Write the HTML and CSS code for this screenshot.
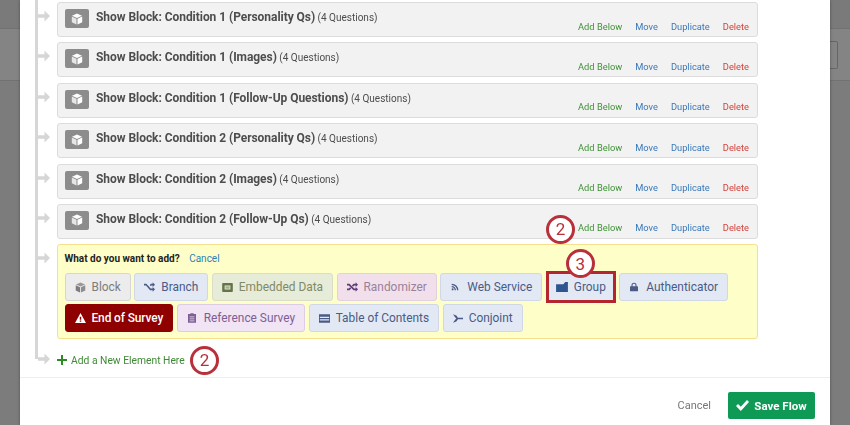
FILE: index.html
```html
<!DOCTYPE html>
<html lang="en">
<head>
  <meta charset="UTF-8">
  <title>Survey Flow</title>
  <link rel="stylesheet" href="styles.css">
</head>
<body>
  <svg class="defs" width="0" height="0">
    <symbol id="arrow" viewBox="0 0 12 12"><path d="M0 4.300h6.500V.5L12 6l-5.500 5.500V7.700H0z"/></symbol>
    <symbol id="cube" viewBox="0 0 12 12"><path d="M6 .5l5 2.200L6 5 1 2.700z" fill="#fff"/><path d="M.8 3.600L5.500 5.800v5.700L.8 9.200z" fill="#e6e6e6"/><path d="M11.200 3.600L6.500 5.800v5.700l4.700-2.300z" fill="#fff"/></symbol>
    <symbol id="cube-tint" viewBox="0 0 12 12"><path d="M6 .5l5 2.200L6 5 1 2.700z" opacity=".75"/><path d="M.8 3.600L5.500 5.800v5.700L.8 9.200z"/><path d="M11.200 3.600L6.500 5.800v5.700l4.700-2.300z" opacity=".85"/></symbol>
    <symbol id="branch" viewBox="0 0 14 12"><path d="M0 2h3l3 3.200L8.500 8H11V6l3 3-3 3v-2H7.700L4.500 6.300 2.500 4H0z"/><path d="M7.500 3.800L8.500 2H11V0l3 3-3 3V4H9.300L8.600 5z"/></symbol>
    <symbol id="shuffle" viewBox="0 0 14 12"><path d="M0 2h3.200l6 6H11V6l3 3-3 3v-2H8.300l-6-6H0zM0 8h2.300l1.600-1.600 1.400 1.400L3.200 10H0zM8.300 2H11V0l3 3-3 3V4H9.200L7.700 5.600 6.300 4.200z"/></symbol>
  </svg>

  <div class="page">
    <div class="side">
      <div class="band band-top"></div>
      <div class="band band-mid"></div>
      <div class="band band-low"></div>
    </div>

    <div class="modal">
      <div class="flow">
        <div class="flow-item">
          <svg class="arrow"><use href="#arrow"/></svg>
          <div class="block">
            <span class="block-icon"><svg width="12" height="12"><use href="#cube"/></svg></span>
            <div class="block-title"><b>Show Block: Condition 1 (Personality Qs)</b> <span>(4 Questions)</span></div>
            <div class="actions"><a class="green">Add Below</a><a class="blue">Move</a><a class="blue">Duplicate</a><a class="red">Delete</a></div>
          </div>
        </div>
        <div class="flow-item">
          <svg class="arrow"><use href="#arrow"/></svg>
          <div class="block">
            <span class="block-icon"><svg width="12" height="12"><use href="#cube"/></svg></span>
            <div class="block-title"><b>Show Block: Condition 1 (Images)</b> <span>(4 Questions)</span></div>
            <div class="actions"><a class="green">Add Below</a><a class="blue">Move</a><a class="blue">Duplicate</a><a class="red">Delete</a></div>
          </div>
        </div>
        <div class="flow-item">
          <svg class="arrow"><use href="#arrow"/></svg>
          <div class="block">
            <span class="block-icon"><svg width="12" height="12"><use href="#cube"/></svg></span>
            <div class="block-title"><b>Show Block: Condition 1 (Follow-Up Questions)</b> <span>(4 Questions)</span></div>
            <div class="actions"><a class="green">Add Below</a><a class="blue">Move</a><a class="blue">Duplicate</a><a class="red">Delete</a></div>
          </div>
        </div>
        <div class="flow-item">
          <svg class="arrow"><use href="#arrow"/></svg>
          <div class="block">
            <span class="block-icon"><svg width="12" height="12"><use href="#cube"/></svg></span>
            <div class="block-title"><b>Show Block: Condition 2 (Personality Qs)</b> <span>(4 Questions)</span></div>
            <div class="actions"><a class="green">Add Below</a><a class="blue">Move</a><a class="blue">Duplicate</a><a class="red">Delete</a></div>
          </div>
        </div>
        <div class="flow-item">
          <svg class="arrow"><use href="#arrow"/></svg>
          <div class="block">
            <span class="block-icon"><svg width="12" height="12"><use href="#cube"/></svg></span>
            <div class="block-title"><b>Show Block: Condition 2 (Images)</b> <span>(4 Questions)</span></div>
            <div class="actions"><a class="green">Add Below</a><a class="blue">Move</a><a class="blue">Duplicate</a><a class="red">Delete</a></div>
          </div>
        </div>
        <div class="flow-item">
          <svg class="arrow"><use href="#arrow"/></svg>
          <div class="block">
            <span class="block-icon"><svg width="12" height="12"><use href="#cube"/></svg></span>
            <div class="block-title"><b>Show Block: Condition 2 (Follow-Up Qs)</b> <span>(4 Questions)</span></div>
            <div class="actions"><a class="green">Add Below</a><a class="blue">Move</a><a class="blue">Duplicate</a><a class="red">Delete</a></div>
            <span class="badge badge-add-below">2</span>
          </div>
        </div>

        <!-- Element picker -->
        <div class="flow-item">
          <svg class="arrow"><use href="#arrow"/></svg>
          <div class="picker">
            <div class="picker-head"><b>What do you want to add?</b> <a class="cancel-link">Cancel</a></div>
            <div class="picker-buttons">
              <button class="el el-gray"><svg width="11" height="11"><use href="#cube-tint"/></svg>Block</button>
              <button class="el el-blue"><svg width="11" height="10"><use href="#branch"/></svg>Branch</button>
              <button class="el el-olive">
                <svg width="11" height="9" viewBox="0 0 13 11"><path fill-rule="evenodd" d="M1 0h11a1 1 0 011 1v9a1 1 0 01-1 1H1a1 1 0 01-1-1V1a1 1 0 011-1zm2 3v5h7V3z"/><path d="M4 4h5v3H4z" opacity=".5"/></svg>Embedded Data</button>
              <button class="el el-pink"><svg width="11" height="10"><use href="#shuffle"/></svg>Randomizer</button>
              <button class="el el-blue">
                <svg class="narrow" width="8" height="8" viewBox="0 0 12 12"><circle cx="2.500" cy="9.500" r="1.600"/><path d="M1 4.500a6.500 6.500 0 016.500 6.500h-2A4.500 4.500 0 001 6.500z"/><path d="M1 1a10 10 0 0110 10H9a8 8 0 00-8-8z"/></svg>Web Service</button>
              <button class="el el-blue el-selected">
                <svg class="folder" width="12" height="10" viewBox="0 0 13 11"><path d="M0 2.500h8L10 0h3v11H0z"/></svg>Group
                <span class="highlight"></span>
                <span class="badge badge-group">3</span>
              </button>
              <button class="el el-blue">
                <svg class="narrow" width="8" height="10" viewBox="0 0 11 12"><path fill-rule="evenodd" d="M2 5V3.500a3.500 3.500 0 017 0V5h1a1 1 0 011 1v5a1 1 0 01-1 1H1a1 1 0 01-1-1V6a1 1 0 011-1zm1.500 0h4V3.500a2 2 0 00-4 0z"/></svg>Authenticator</button>
              <button class="el el-end">
                <svg width="11" height="10" viewBox="0 0 12 11"><path fill-rule="evenodd" d="M6 0l6 11H0zM5.200 4v3.500h1.600V4zm0 4.300v1.400h1.600V8.300z"/></svg>End of Survey</button>
              <button class="el el-purple">
                <svg class="narrow" width="8" height="10" viewBox="0 0 10 12"><path fill-rule="evenodd" d="M3 1V0h4v1h3v11H0V1zM2 4v1h6V4zm0 2.500v1h6v-1zM2 9v1h6V9z"/></svg>Reference Survey</button>
              <button class="el el-blue">
                <svg width="11" height="9" viewBox="0 0 13 10"><path fill-rule="evenodd" d="M0 0h13v10H0zm1 3v1.500h11V3zm0 3v1.500h11V6z"/></svg>Table of Contents</button>
              <button class="el el-blue">
                <svg width="10" height="9" viewBox="0 0 12 10"><path d="M0 0l4 1.500 2 2.500h6v2H6L4 8.500 0 10l2.500-3.500L4 5 2.500 3.500z"/></svg>Conjoint</button>
            </div>
          </div>
        </div>

        <div class="flow-item flow-last">
          <svg class="arrow"><use href="#arrow"/></svg>
          <a class="add-new">
            <svg width="10" height="10" viewBox="0 0 10 10"><path d="M4 0h2v4h4v2H6v4H4V6H0V4h4z"/></svg>Add a New Element Here
          </a>
          <span class="badge badge-add-new">2</span>
        </div>
      </div>

      <div class="modal-footer">
        <a class="footer-cancel">Cancel</a>
        <button class="save-btn">
          <svg width="13" height="11" viewBox="0 0 13 11"><path d="M0 6l2-2 2.800 2.800L11 0l2 2-8.200 9z"/></svg>Save Flow</button>
      </div>
    </div>

    <div class="side side-right">
      <div class="band band-top"></div>
      <div class="band band-mid"><div class="stub"></div></div>
      <div class="band band-low"></div>
    </div>
  </div>
</body>
</html>
```

FILE: styles.css
```css
* {
  box-sizing: border-box;
}

html, body {
  margin: 0;
  height: 100%;
  overflow: hidden;
}

body {
  font-family: Roboto, "Liberation Sans", sans-serif;
  color: #4d4d4d;
}

.defs {
  position: absolute;
}

.page {
  display: flex;
  height: 425px;
  filter: blur(0.35px);
}

/* dimmed page behind the dialog */
.side {
  width: 20px;
  display: flex;
  flex-direction: column;
  flex: none;
}

.band {
  border-bottom: 1px solid #727272;
}

.band-top {
  height: 29px;
  background: #7a7a7a;
}

.band-mid {
  height: 52px;
  background: #848484;
  padding-top: 12px;
}

.band-low {
  flex: 1;
  background: #7c7c7c;
  border-bottom: none;
}

.stub {
  width: 8px;
  height: 28px;
  border: 1px solid #666;
  border-left: none;
  border-radius: 0 2px 2px 0;
}

.modal {
  width: 810px;
  flex: none;
  background: white;
  display: flex;
  flex-direction: column;
  box-shadow: 0 0 3px rgba(0,0,0,0.35);
  position: relative;
}

.flow {
  height: 359px;
  flex: none;
  margin-left: 15px;
  padding-top: 2px;
  border-left: 3px solid #d6d6d6;
  width: 723px;
  display: flex;
  flex-direction: column;
  gap: 5.4px;
}

.flow-item {
  display: flex;
  align-items: flex-start;
  position: relative;
}

.arrow {
  width: 12px;
  height: 12px;
  margin-top: 8px;
  margin-right: 7px;
  flex: none;
  fill: #d6d6d6;
}

.block {
  flex: 1;
  height: 35px;
  background: #f2f2f2;
  border: 1px solid #dcdcdc;
  border-radius: 3px;
  display: flex;
  padding: 6px 8px 0 7px;
  position: relative;
}

.block-icon {
  width: 24px;
  height: 19px;
  background: #8c8c8c;
  border-radius: 2px;
  display: flex;
  align-items: center;
  justify-content: center;
  flex: none;
}

.block-title {
  margin-left: 7px;
  font-size: 10px;
  line-height: 16px;
}

.block-title b {
  font-size: 12px;
  font-weight: 700;
  letter-spacing: -0.05px;
}

.actions {
  margin-left: auto;
  align-self: flex-end;
  display: flex;
  gap: 13px;
  font-size: 9.3px;
  line-height: 14px;
  padding-bottom: 2.5px;
}

.green { color: #3f9136; }
.blue { color: #3a78b8; }
.red { color: #d2423b; }

/* yellow element picker */
.picker {
  flex: 1;
  height: 95px;
  background: #fefec8;
  border: 1px solid #f6e08e;
  border-radius: 3px;
  padding: 8px 6.5px;
}

.picker-head {
  font-size: 10px;
  line-height: 12px;
  color: #222;
  margin-bottom: 8px;
}

.cancel-link {
  color: #2f7fb8;
  margin-left: 7px;
}

.picker-buttons {
  display: flex;
  flex-wrap: wrap;
  gap: 3px 3.5px;
}

.el {
  height: 28px;
  display: flex;
  align-items: center;
  gap: 6px;
  padding: 0 9px;
  font-family: inherit;
  font-size: 11.9px;
  border-radius: 3px;
  border: 1px solid;
  position: relative;
}

.el svg {
  fill: currentColor;
  flex: none;
}

.el .narrow {
  margin: 0 2px 0 1px;
}

.el-gray { background: #ececec; border-color: #d6d6d6; color: #7c7c7c; }
.el-blue { background: #e3e9f4; border-color: #d0d8e6; color: #4a5b85; }
.el-olive { background: #e6ecd8; border-color: #d9dfc6; color: #7f8a68; }
.el-pink { background: #f1e0ec; border-color: #e2d0de; color: #9a8198; }
.el-pink svg { color: #5f3d7c; }
.el-olive svg { color: #66744a; }
.el-end { background: #8f0000; border-color: #8f0000; color: white; font-weight: 500; letter-spacing: -0.1px; }
.el-purple { background: #f0e4f5; border-color: #dccde4; color: #7d5f96; }

.el .folder {
  color: #2f5591;
}

.highlight {
  position: absolute;
  left: -1px;
  right: -1px;
  top: -3px;
  bottom: -3px;
  border: 3px solid #b3262e;
}

.add-new {
  display: flex;
  align-items: center;
  gap: 4px;
  font-size: 10.3px;
  color: #3f8a36;
  margin-top: 9px;
}

.add-new svg {
  fill: #2d8a25;
}

.badge {
  position: absolute;
  width: 29px;
  height: 29px;
  border-radius: 50%;
  background: white;
  border: 3px solid #b8303a;
  color: #b8303a;
  font-size: 17px;
  font-weight: 400;
  display: flex;
  align-items: center;
  justify-content: center;
}

.badge-add-below {
  left: 488px;
  top: 10px;
}

.badge-group {
  left: 19px;
  top: -25px;
}

.badge-add-new {
  left: 152px;
  top: 1px;
}

.modal-footer {
  margin-top: auto;
  height: 48px;
  border-top: 1px solid #eee;
  display: flex;
  align-items: center;
  justify-content: flex-end;
  gap: 17px;
  padding: 8px 15px 0 0;
}

.footer-cancel {
  font-size: 11px;
  color: #777;
}

.save-btn {
  width: 87px;
  height: 27px;
  background: #0e9a54;
  border: none;
  border-radius: 2px;
  color: white;
  font-family: inherit;
  font-size: 11.5px;
  font-weight: 700;
  display: flex;
  align-items: center;
  justify-content: center;
  gap: 5px;
}

.save-btn svg {
  fill: white;
}
```
